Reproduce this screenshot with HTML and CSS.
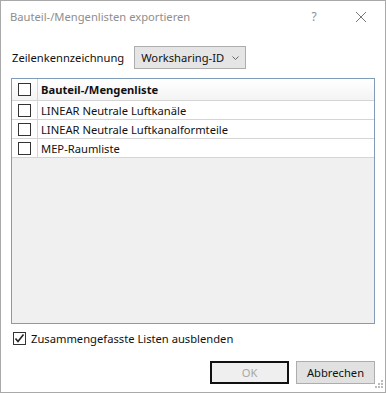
FILE: index.html
```html
<!DOCTYPE html>
<html lang="de">
<head>
  <meta charset="UTF-8" />
  <title>Bauteil-/Mengenlisten exportieren</title>
  <link rel="stylesheet" href="styles.css">
</head>
<body>

  <div class="dialog">
    <!-- Title bar -->
    <div class="titlebar">
      <span class="title">Bauteil-/Mengenlisten exportieren</span>
      <span class="help">?</span>
      <span class="close">
        <svg width="12" height="12" viewBox="0 0 12 12"><path d="M1 1 L11 11 M11 1 L1 11" stroke="#777" stroke-width="1"/></svg>
      </span>
    </div>

    <div class="content">
      <!-- Row label -->
      <div class="label-row">
        <span class="label">Zeilenkennzeichnung</span>
        <div class="combo">
          <span>Worksharing-ID</span>
          <svg width="7" height="4" viewBox="0 0 7 4"><path d="M0.5 0.5 L3.5 3.5 L6.5 0.5" fill="none" stroke="#666" stroke-width="1"/></svg>
        </div>
      </div>

      <!-- List -->
      <div class="list">
        <div class="list-row header">
          <div class="cell-check"><span class="box"></span></div>
          <div class="cell-name">Bauteil-/Mengenliste</div>
        </div>
        <div class="list-row">
          <div class="cell-check"><span class="box"></span></div>
          <div class="cell-name">LINEAR Neutrale Luftkanäle</div>
        </div>
        <div class="list-row">
          <div class="cell-check"><span class="box"></span></div>
          <div class="cell-name">LINEAR Neutrale Luftkanalformteile</div>
        </div>
        <div class="list-row">
          <div class="cell-check"><span class="box"></span></div>
          <div class="cell-name">MEP-Raumliste</div>
        </div>
      </div>

      <!-- Option -->
      <div class="option">
        <span class="box checked">
          <svg width="11" height="11" viewBox="0 0 11 11"><path d="M1.5 5.5 L4 8.5 L9.5 1.5" fill="none" stroke="#222" stroke-width="1.6"/></svg>
        </span>
        <span>Zusammengefasste Listen ausblenden</span>
      </div>

      <!-- Buttons -->
      <div class="buttons">
        <button class="btn default" disabled>OK</button>
        <button class="btn">Abbrechen</button>
      </div>
    </div>

    <svg class="grip" width="10" height="10" viewBox="0 0 10 10" fill="#bbb">
      <rect x="8" y="0" width="2" height="2"/>
      <rect x="5" y="3" width="2" height="2"/><rect x="8" y="3" width="2" height="2"/>
      <rect x="2" y="6" width="2" height="2"/><rect x="5" y="6" width="2" height="2"/><rect x="8" y="6" width="2" height="2"/>
    </svg>
  </div>

</body>
</html>
```

FILE: styles.css
```css
body {
  margin: 0;
  font-family: "Noto Sans", "Open Sans", sans-serif;
  font-size: 11.2px;
  color: #111;
  background: #fff;
}

.dialog {
  position: relative;
  width: 386px;
  height: 393px;
  box-sizing: border-box;
  border: 1px solid #a9a9a9;
  background: #fff;
  display: flex;
  flex-direction: column;
}

/* Title bar */
.titlebar {
  display: flex;
  align-items: center;
  height: 31px;
  padding-left: 9px;
  color: #8e8e8e;
}
.titlebar .title {
  flex: 1;
}
.titlebar .help {
  width: 46px;
  text-align: center;
  font-size: 12px;
  margin-right: 1px;
}
.titlebar .close {
  width: 46px;
  display: flex;
  justify-content: center;
  margin-right: 1px;
}

.content {
  flex: 1;
  display: flex;
  flex-direction: column;
  padding: 14px 10px 8px 10px;
}

/* Combo row */
.label-row {
  display: flex;
  align-items: center;
  gap: 10px;
  height: 23px;
  padding-left: 1px;
}
.combo {
  display: flex;
  align-items: center;
  gap: 8px;
  height: 21px;
  padding: 0 6px 0 6px;
  border: 1px solid #adadad;
  background: #e5e5e5;
}

/* List */
.list {
  margin-top: 9px;
  height: 244px;
  border: 1px solid #7f9db9;
  background: #f0f0f0;
}
.list-row {
  display: flex;
  height: 18px;
  background: #fff;
  border-bottom: 1px solid #d5d5d5;
}
.list-row.header {
  height: 21px;
  background: linear-gradient(#fff, #f4f4f5);
  font-weight: bold;
}
.cell-check {
  width: 25px;
  border-right: 1px solid #d5d5d5;
  display: flex;
  align-items: center;
  justify-content: center;
}
.cell-name {
  display: flex;
  align-items: center;
  padding-left: 3px;
}
.box {
  width: 11px;
  height: 11px;
  border: 1px solid #333;
  background: #fff;
  display: flex;
  align-items: center;
  justify-content: center;
}

/* Option */
.option {
  display: flex;
  align-items: center;
  gap: 5px;
  margin-top: 7px;
  padding-left: 2px;
}

/* Buttons */
.buttons {
  display: flex;
  justify-content: flex-end;
  gap: 7px;
  margin-top: 15px;
}
.btn {
  width: 79px;
  height: 23px;
  box-sizing: border-box;
  font-family: inherit;
  font-size: 11.2px;
  color: #111;
  border: 1px solid #adadad;
  background: #e1e1e1;
  padding: 0;
}
.btn.default {
  border: 2px solid #111;
  background: #efefef;
  color: #a8a8a8;
}

.grip {
  position: absolute;
  right: 2px;
  bottom: 2px;
}
```
